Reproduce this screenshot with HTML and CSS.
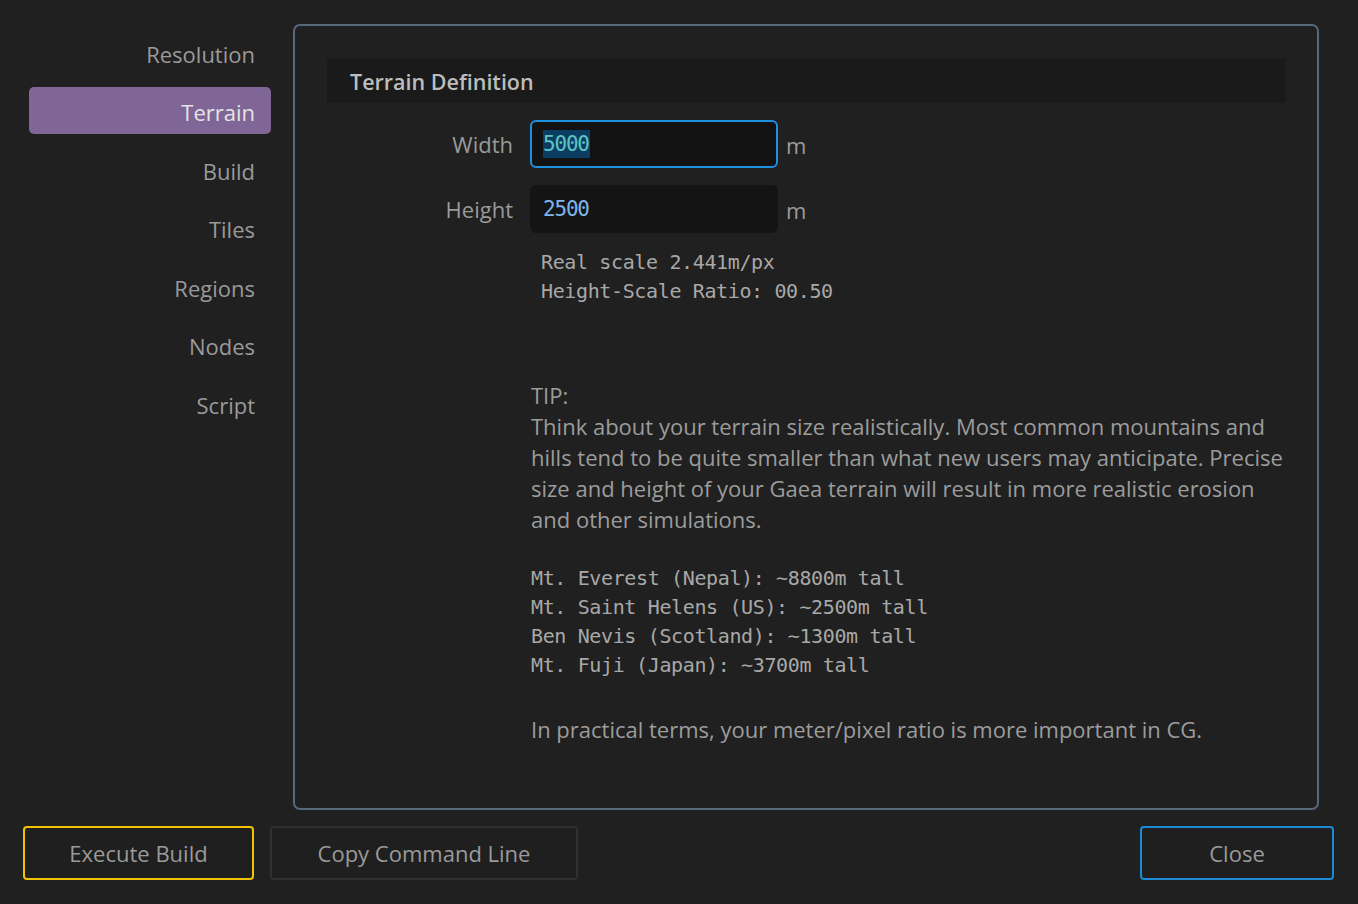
FILE: index.html
```html
<!DOCTYPE html>
<html>
<head>
<meta charset="utf-8">
<link rel="stylesheet" href="styles.css">
</head>
<body>
<div class="app">
  <div class="main">
    <nav class="sidebar">
      <div class="nav-item">Resolution</div>
      <div class="nav-item active">Terrain</div>
      <div class="nav-item">Build</div>
      <div class="nav-item">Tiles</div>
      <div class="nav-item">Regions</div>
      <div class="nav-item">Nodes</div>
      <div class="nav-item">Script</div>
    </nav>
    <section class="panel">
      <div class="panel-header">Terrain Definition</div>
      <div class="form">
        <div class="row">
          <label class="label">Width</label>
          <div class="input focused"><span class="sel">5000</span></div>
          <span class="unit">m</span>
        </div>
        <div class="row">
          <label class="label">Height</label>
          <div class="input"><span class="val">2500</span></div>
          <span class="unit">m</span>
        </div>
        <div class="scale mono">Real scale 2.441m/px<br>Height-Scale Ratio: 00.50</div>
      </div>
      <div class="tip">
        <p class="para">TIP:<br>Think about your terrain size realistically. Most common mountains and<br>hills tend to be quite smaller than what new users may anticipate. Precise<br>size and height of your Gaea terrain will result in more realistic erosion<br>and other simulations.</p>
        <p class="mono list">Mt. Everest (Nepal): ~8800m tall<br>Mt. Saint Helens (US): ~2500m tall<br>Ben Nevis (Scotland): ~1300m tall<br>Mt. Fuji (Japan): ~3700m tall</p>
        <p class="para">In practical terms, your meter/pixel ratio is more important in CG.</p>
      </div>
    </section>
  </div>
  <footer class="footer">
    <button class="btn btn-exec">Execute Build</button>
    <button class="btn btn-copy">Copy Command Line</button>
    <div class="spacer"></div>
    <button class="btn btn-close">Close</button>
  </footer>
</div>
</body>
</html>
```

FILE: styles.css
```css
* { box-sizing: border-box; }
html, body {
  margin: 0;
  padding: 0;
  background: #202020;
  width: 1358px;
  height: 904px;
  overflow: hidden;
  font-family: "Open Sans", "Noto Sans", sans-serif;
  color: #9c9c9c;
}
.app {
  display: flex;
  flex-direction: column;
  height: 904px;
  padding-top: 24px;
}
.main {
  display: flex;
  height: 786px;
  padding-right: 39px;
}
.sidebar {
  width: 293px;
  flex: none;
  padding: 4.5px 22px 0 29px;
  display: flex;
  flex-direction: column;
  gap: 11.5px;
}
.nav-item {
  height: 47px;
  line-height: 47px;
  padding: 2px 16px 0 0;
  text-align: right;
  font-size: 22px;
  color: #9a9a9a;
  border-radius: 5px;
}
.nav-item.active {
  background: #7f6697;
  color: #e4e4e4;
}
.panel {
  flex: 1;
  border: 2px solid #56687a;
  border-radius: 7px;
  padding: 32px 31px 0 32px;
}
.panel-header {
  height: 45px;
  line-height: 47px;
  background: #1a1a1a;
  padding-left: 23px;
  font-size: 21.5px;
  font-weight: 600;
  color: #bdbdbd;
}
.form {
  padding-top: 17px;
}
.row {
  display: flex;
  align-items: center;
  height: 48px;
  margin-bottom: 17px;
}
.label {
  width: 203px;
  text-align: right;
  padding-right: 17px;
  font-size: 22px;
  color: #9a9a9a;
}
.input {
  width: 248px;
  height: 48px;
  background: #141414;
  border-radius: 6px;
  padding-left: 13px;
  display: flex;
  align-items: center;
  font-family: "DejaVu Sans Mono", monospace;
  font-size: 21px;
  letter-spacing: -1.2px;
}
.input.focused {
  background: #121212;
  border: 2px solid #1f8fe0;
  padding-left: 11px;
}
.sel {
  background: #0b3d63;
  color: #5cc5c0;
  line-height: 28px;
  padding-right: 1px;
}
.val {
  color: #7cb6ec;
}
.unit {
  margin-left: 8px;
  font-size: 22px;
  color: #9a9a9a;
  padding-top: 2px;
}
.mono {
  font-family: "DejaVu Sans Mono", monospace;
  font-size: 20px;
  letter-spacing: -0.37px;
  line-height: 29px;
  color: #a8a8a8;
}
.scale {
  margin: -2px 0 0 214px;
}
.tip {
  margin: 74px 0 0 204px;
}
.para {
  margin: 0;
  font-size: 22px;
  line-height: 31px;
  white-space: nowrap;
  color: #9c9c9c;
}
.list {
  margin: 29px 0 34px 0;
  white-space: nowrap;
}
.footer {
  display: flex;
  gap: 16px;
  margin-top: 16px;
  padding-left: 23px;
  height: 54px;
  padding-right: 24px;
}
.spacer { flex: 1; }
.btn {
  height: 54px;
  background: #1f1f1f;
  border-radius: 4px;
  font-family: "Open Sans", "Noto Sans", sans-serif;
  font-size: 22px;
  color: #9a9a9a;
  padding: 0;
}
.btn-exec {
  width: 231px;
  border: 2px solid #f2c200;
}
.btn-copy {
  width: 308px;
  border: 2px solid #303030;
}
.btn-close {
  width: 194px;
  border: 2px solid #1d8ad6;
}
```
